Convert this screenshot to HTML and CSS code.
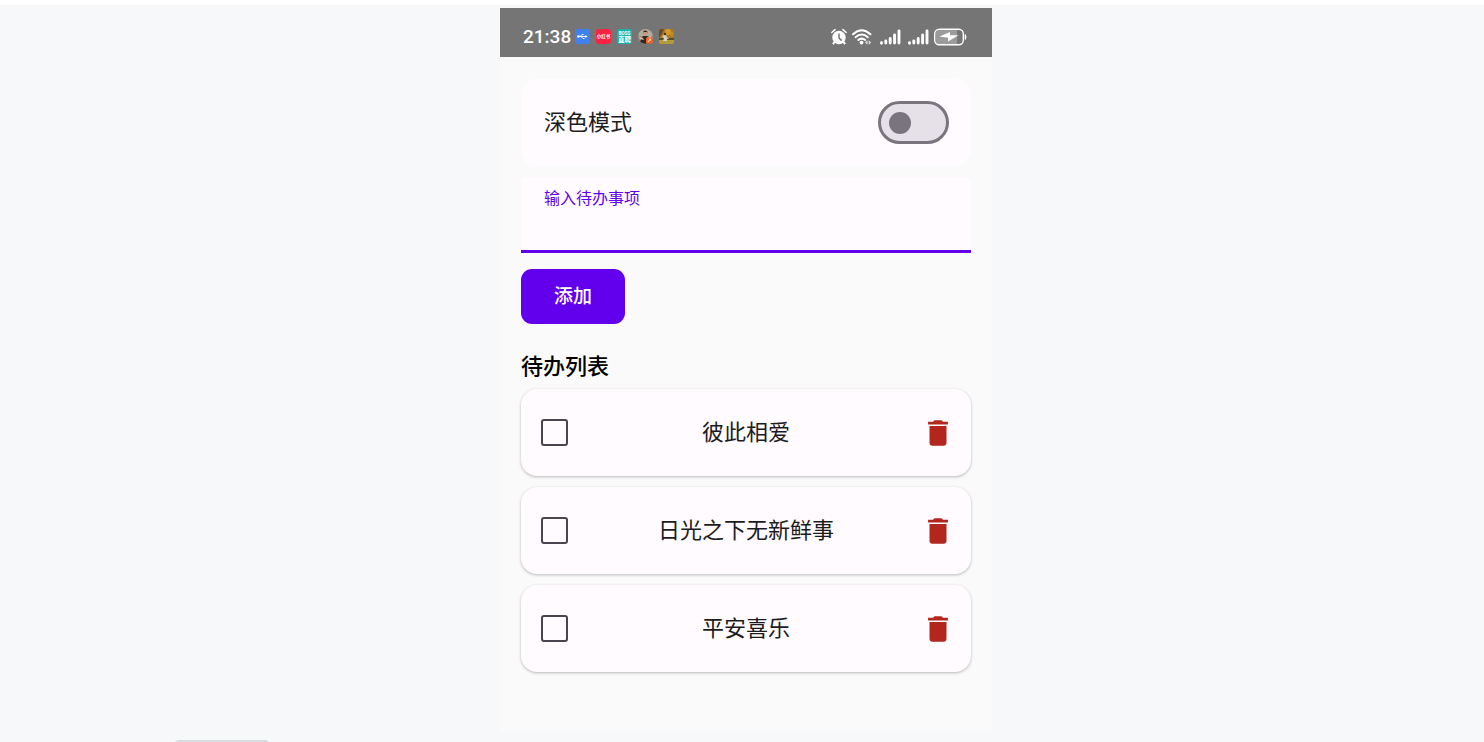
FILE: index.html
```
<!DOCTYPE html>
<html lang="zh-CN">
<head>
    <meta charset="UTF-8">
    <meta name="viewport" content="width=device-width, initial-scale=1.0">
    <title>待办列表</title>
    <link rel="stylesheet" href="styles.css">
</head>
<body>

    <div class="page">
        <div class="phone">
            <header class="status-bar">
                <span class="time">21:38</span>
                <div class="app-icons">
                    <svg width="15" height="15" viewBox="0 0 15 15">
                        <rect width="15" height="15" rx="3" fill="#3f82ee"/>
                        <path d="M3 7.5h8M5 7.5l2-2h1.5M6 7.5l2 2h1.5" fill="none" stroke="#fff" stroke-width="0.9"/>
                        <circle cx="3.4" cy="7.5" r="1.2" fill="#fff"/>
                        <path d="M10.5 6l2 1.5-2 1.5z" fill="#fff"/>
                    </svg>
                    <svg width="15" height="15" viewBox="0 0 15 15">
                        <rect width="15" height="15" rx="3" fill="#fb2242"/>
                        <text x="7.5" y="9.3" class="icon-text" font-size="4.5">小红书</text>
                    </svg>
                    <svg width="15" height="15" viewBox="0 0 15 15">
                        <rect width="15" height="15" rx="3" fill="#18b3b0"/>
                        <text x="7.5" y="5.5" class="icon-text" font-size="4.5">BOSS</text>
                        <text x="7.5" y="12.5" class="icon-text" font-size="6.5">直聘</text>
                    </svg>
                    <svg width="15" height="15" viewBox="0 0 15 15">
                        <circle cx="7.5" cy="7.5" r="7.5" fill="#9b9286"/>
                        <path d="M1 4a7.5 7.5 0 0 1 13 0v3H1z" fill="#b5ab9c"/>
                        <path d="M2 12.5l3-5.5h5l3 3-1 3a7.5 7.5 0 0 1-10-.5z" fill="#2f2724"/>
                        <path d="M1 8l4 1 1 2-4-1zM9 8l4-1v2l-3 1z" fill="#d9b7a0"/>
                        <circle cx="7.3" cy="4.2" r="2.2" fill="#c79a80"/>
                        <path d="M5 3.8a2.3 2.3 0 0 1 4.6 0l-1-.8H6z" fill="#33241e"/>
                        <rect x="8" y="8.5" width="6.5" height="6" rx="1" fill="#fb6420"/>
                        <path d="M10 13l2.2-3M11 10h1.5v1.5" stroke="#fff" stroke-width="0.8" fill="none"/>
                    </svg>
                    <svg width="15" height="15" viewBox="0 0 15 15">
                        <rect width="15" height="15" rx="2" fill="#a87a26"/>
                        <path d="M0 2a2 2 0 0 1 2-2h3L3 5 0 9z" fill="#6c4c20"/>
                        <circle cx="9" cy="3" r="3" fill="#d89a26"/>
                        <circle cx="12.5" cy="5" r="2" fill="#c98a1c"/>
                        <path d="M0 9h15v2H0z" fill="#55501f"/>
                        <path d="M0 11h15v2a2 2 0 0 1-2 2H2a2 2 0 0 1-2-2z" fill="#b59a3c"/>
                        <path d="M5 5.5h2l1 3 2 1-2 .5v2H4l1-3-2-1z" fill="#d6d0c4"/>
                        <circle cx="6" cy="5" r="1.2" fill="#42301f"/>
                    </svg>
                </div>
                <div class="system-icons">
                    <svg width="16" height="18" viewBox="0 0 16 18">
                        <circle cx="8" cy="9.5" r="6.7" fill="#fff"/>
                        <path d="M.8 4.5L4 1.6M15.2 4.5L12 1.6" stroke="#fff" stroke-width="1.5" stroke-linecap="round"/>
                        <path d="M3.5 14l-1.6 2.2M12.5 14l1.6 2.2" stroke="#fff" stroke-width="2"/>
                        <path d="M8 5.5V10l2.6 2.6" stroke="#757575" stroke-width="1.5" fill="none"/>
                    </svg>
                    <svg width="21" height="18" viewBox="0 0 21 18">
                        <g fill="none" stroke="#fff" stroke-width="2" stroke-linecap="round">
                            <path d="M1 6.2q8.7-8 17.4 0"/>
                            <path d="M3.5 9.2q6.2-5.4 12.4 0"/>
                            <path d="M6.2 12q3.5-2.8 7 0"/>
                        </g>
                        <circle cx="9.5" cy="14.6" r="1.9" fill="#fff"/>
                        <path d="M13 14.5l2.5-2.2v4.4zM19.2 14.5l-2.5-2.2v4.4z" fill="#ddd"/>
                    </svg>
                    <svg width="23" height="18" viewBox="-2 0 23 18">
                        <path d="M1.5 14.800v.4M5.800 15v-2M10.200 15v-4.500M14.600 15V7M19 15V3" stroke="#fff" stroke-width="2.900" stroke-linecap="round"/>
                    </svg>
                    <svg width="23" height="18" viewBox="-2 0 23 18">
                        <path d="M1.5 14.800v.4M5.800 15v-2M10.200 15v-4.500M14.600 15V7M19 15V3" stroke="#fff" stroke-width="2.900" stroke-linecap="round"/>
                    </svg>
                    <svg width="33" height="18" viewBox="0 0 33 18">
                        <path d="M5 2h18v14H5a3 3 0 0 1-3-3V5a3 3 0 0 1 3-3z" fill="#9b9b9b"/>
                        <rect x="0.7" y="1.2" width="28.6" height="15.6" rx="4.5" fill="none" stroke="#fff" stroke-width="1.4"/>
                        <path d="M31.2 6.5q1.6 2.5 0 5z" fill="#fff" stroke="#fff"/>
                        <path d="M5.5 8.5L16 4v3.300h8.500L14 13.500V9.800z" fill="#fff"/>
                    </svg>
                </div>
            </header>

            <main class="content">
                <div class="setting">
                    <label for="darkMode">深色模式</label>
                    <input type="checkbox" role="switch" class="switch" id="darkMode">
                </div>

                <form class="todo-form">
                    <div class="field">
                        <label for="todoInput">输入待办事项</label>
                        <input type="text" id="todoInput" autocomplete="off">
                    </div>
                    <button type="button" class="add-btn">添加</button>
                </form>

                <h2>待办列表</h2>
                <ul class="todo-list">
                    <li class="todo">
                        <input type="checkbox" class="check" id="todo1">
                        <label for="todo1">彼此相爱</label>
                        <button type="button" class="delete-btn" aria-label="删除">
                            <svg viewBox="0 0 24 24"><path d="M6 19c0 1.1.9 2 2 2h8c1.1 0 2-.9 2-2V7H6v12zM19 4h-3.5l-1-1h-5l-1 1H5v2h14V4z"/></svg>
                        </button>
                    </li>
                    <li class="todo">
                        <input type="checkbox" class="check" id="todo2">
                        <label for="todo2">日光之下无新鲜事</label>
                        <button type="button" class="delete-btn" aria-label="删除">
                            <svg viewBox="0 0 24 24"><path d="M6 19c0 1.1.9 2 2 2h8c1.1 0 2-.9 2-2V7H6v12zM19 4h-3.5l-1-1h-5l-1 1H5v2h14V4z"/></svg>
                        </button>
                    </li>
                    <li class="todo">
                        <input type="checkbox" class="check" id="todo3">
                        <label for="todo3">平安喜乐</label>
                        <button type="button" class="delete-btn" aria-label="删除">
                            <svg viewBox="0 0 24 24"><path d="M6 19c0 1.1.9 2 2 2h8c1.1 0 2-.9 2-2V7H6v12zM19 4h-3.5l-1-1h-5l-1 1H5v2h14V4z"/></svg>
                        </button>
                    </li>
                </ul>
            </main>
        </div>
        <div class="next-block"></div>
    </div>

</body>
</html>
```
FILE: styles.css
```
* {
    box-sizing: border-box;
}

body {
    margin: 0;
    font-family: Roboto, "Noto Sans CJK SC", sans-serif;
    background-color: #f6f8fa;
    color: #1c1b1f;
}

.page {
    display: flex;
    flex-direction: column;
    height: 100vh;
    overflow: hidden;
    padding-left: 8px;
    border-top: 5px solid #fff;
}

.phone {
    display: flex;
    flex-direction: column;
    flex-shrink: 0;
    width: 100%;
    max-width: 492px;
    margin: 3px auto 8px;
    background-color: #fafafa;
}

/* Status bar */
.status-bar {
    display: flex;
    align-items: center;
    padding: 18px 25px 10px 23px;
    background-color: #757575;
    color: #fff;
}

.time {
    font-size: 19px;
    font-weight: 500;
    line-height: 21px;
}

.status-bar svg {
    display: block;
}

.app-icons {
    display: flex;
    gap: 6px;
    margin-left: 4px;
}

.icon-text {
    fill: #fff;
    font-weight: 700;
    text-anchor: middle;
}

.system-icons {
    display: flex;
    gap: 5px;
    margin-left: auto;
}

/* App */
.content {
    padding: 22px 21px 60px;
}

.setting {
    display: flex;
    align-items: center;
    justify-content: space-between;
    padding: 22px;
    margin-bottom: 11px;
    border-radius: 16px;
    background-color: #fffbfe;
    font-size: 22px;
}

.setting label {
    padding-left: 1px;
    line-height: 35px;
}

.switch {
    appearance: none;
    display: flex;
    align-items: center;
    width: 71px;
    height: 43px;
    margin: 0;
    padding: 0 8px;
    border: 3px solid #79747e;
    border-radius: 22px;
    background-color: #e6e0e9;
    cursor: pointer;
}

.switch::before {
    content: "";
    width: 22px;
    height: 22px;
    border-radius: 50%;
    background-color: #79747e;
}

.switch:checked {
    justify-content: flex-end;
}

.field {
    display: flex;
    flex-direction: column;
    padding: 10px 23px 0;
    margin-bottom: 16px;
    border-bottom: 3px solid #6200ee;
    border-radius: 5px 5px 0 0;
    background-color: #fffbfe;
}

.field label {
    color: #6200ee;
    font-size: 16px;
    line-height: 24px;
}

.field input {
    height: 39px;
    padding: 0;
    border: none;
    outline: none;
    background: none;
    font-family: inherit;
    font-size: 22px;
}

.add-btn {
    display: block;
    padding: 13px 33px;
    border: none;
    border-radius: 11px;
    background-color: #6200ee;
    color: #fff;
    font-family: inherit;
    font-size: 19px;
    font-weight: 500;
    line-height: 29px;
    cursor: pointer;
}

h2 {
    margin: 26px 0 6px;
    color: #000;
    font-size: 22px;
    font-weight: 500;
    line-height: 33px;
}

.todo-list {
    display: flex;
    flex-direction: column;
    gap: 11px;
    margin: 0;
    padding: 0;
    list-style: none;
}

.todo {
    display: flex;
    align-items: center;
    padding: 26px 16px;
    border-radius: 16px;
    background-color: #fffbfe;
    box-shadow: 0 1px 3px rgba(0, 0, 0, 0.27);
}

.todo label {
    flex: 1;
    font-size: 22px;
    line-height: 35px;
    text-align: center;
}

.check {
    appearance: none;
    width: 27px;
    height: 27px;
    margin: 0 3px 0 4px;
    border: 2px solid #49454f;
    border-radius: 3px;
    cursor: pointer;
}

.check:checked {
    background-color: #6200ee;
}

.delete-btn {
    width: 34px;
    height: 34px;
    padding: 0;
    border: none;
    background: none;
    cursor: pointer;
}

.delete-btn svg {
    display: block;
    fill: #b3261e;
}

/* Top edge of the block below the phone */
.next-block {
    flex-shrink: 0;
    width: 94px;
    height: 30px;
    margin-left: 167px;
    border-radius: 4px;
    background-color: #d8dbe0;
}
```
